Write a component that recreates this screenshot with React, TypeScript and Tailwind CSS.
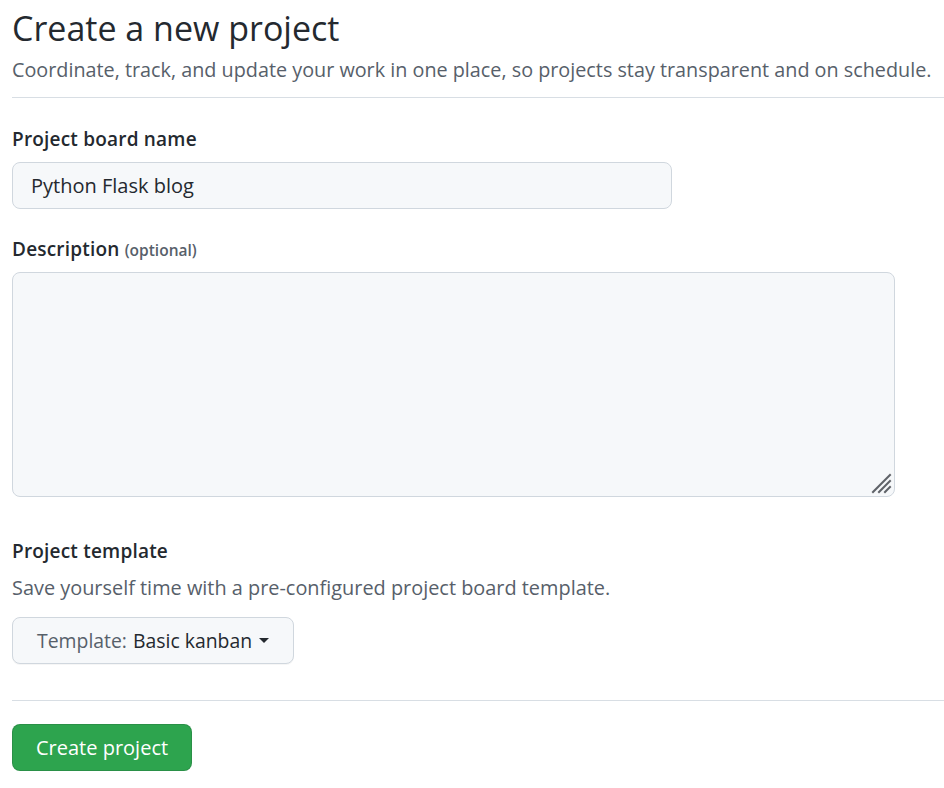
import React from "react";

export default function App() {
  return (
    <div className="min-h-screen bg-white pl-3 text-[#24292f]" style={{ fontFamily: '"Open Sans", "Noto Sans", sans-serif' }}>
      <div className="pt-[3px]">
        <h1 className="text-[34px] leading-[50px] font-normal text-[#24292f]">Create a new project</h1>
        <p className="mt-[2px] text-[19.8px] leading-[30px] text-[#57606a] whitespace-nowrap">
          Coordinate, track, and update your work in one place, so projects stay transparent and on schedule.
        </p>
      </div>
      <div className="mt-[12px] h-px bg-[#d8dee4]" />

      <div className="mt-[28px]">
        <label className="block text-[19px] leading-[26px] font-semibold tracking-[0.2px]">Project board name</label>
        <div className="mt-[10px] flex h-[47px] w-[660px] items-center rounded-lg border border-[#d0d7de] bg-[#f6f8fa] px-[18px] text-[20px]">
          Python Flask blog
        </div>
      </div>

      <div className="mt-[26px]">
        <label className="block text-[19px] leading-[26px] font-semibold tracking-[0.2px] pt-px">
          Description <span className="text-[15.5px] text-[#57606a] tracking-normal">(optional)</span>
        </label>
        <div className="relative mt-[9px] h-[225px] w-[883px] rounded-lg border border-[#d0d7de] bg-[#f6f8fa]">
          <svg className="absolute bottom-[2px] right-[2px]" width="22" height="22" viewBox="0 0 22 22">
            <g stroke="#5f6368" strokeWidth="2" strokeLinecap="square">
              <line x1="3" y1="20" x2="20" y2="3" />
              <line x1="9" y1="20" x2="20" y2="9" />
              <line x1="15" y1="20" x2="20" y2="15" />
            </g>
          </svg>
        </div>
      </div>

      <div className="mt-[41px]">
        <label className="block text-[19px] leading-[26px] font-semibold tracking-[0.2px]">Project template</label>
        <p className="mt-[11px] text-[19.9px] leading-[26px] text-[#57606a]">Save yourself time with a pre-configured project board template.</p>
        <button className="mt-[16px] flex h-[47px] items-center rounded-lg border border-[#d0d7de] bg-[#f6f8fa] px-[24px] text-[19.4px] shadow-[0_1px_0_rgba(27,31,36,0.04)]">
          <span className="text-[#57606a]">Template:</span>
          <span className="ml-[6px] text-[#24292f]">Basic kanban</span>
          <span className="ml-[7px] inline-block h-0 w-0 border-x-[5px] border-t-[5px] border-x-transparent border-t-[#24292f]" />
        </button>
      </div>

      <div className="mt-[36px] h-px bg-[#d8dee4]" />

      <button className="mt-[23px] flex h-[47px] items-center rounded-lg border border-[rgba(27,31,36,0.15)] bg-[#2da44e] px-[23px] text-[20px] text-white">
        Create project
      </button>
    </div>
  );
}
